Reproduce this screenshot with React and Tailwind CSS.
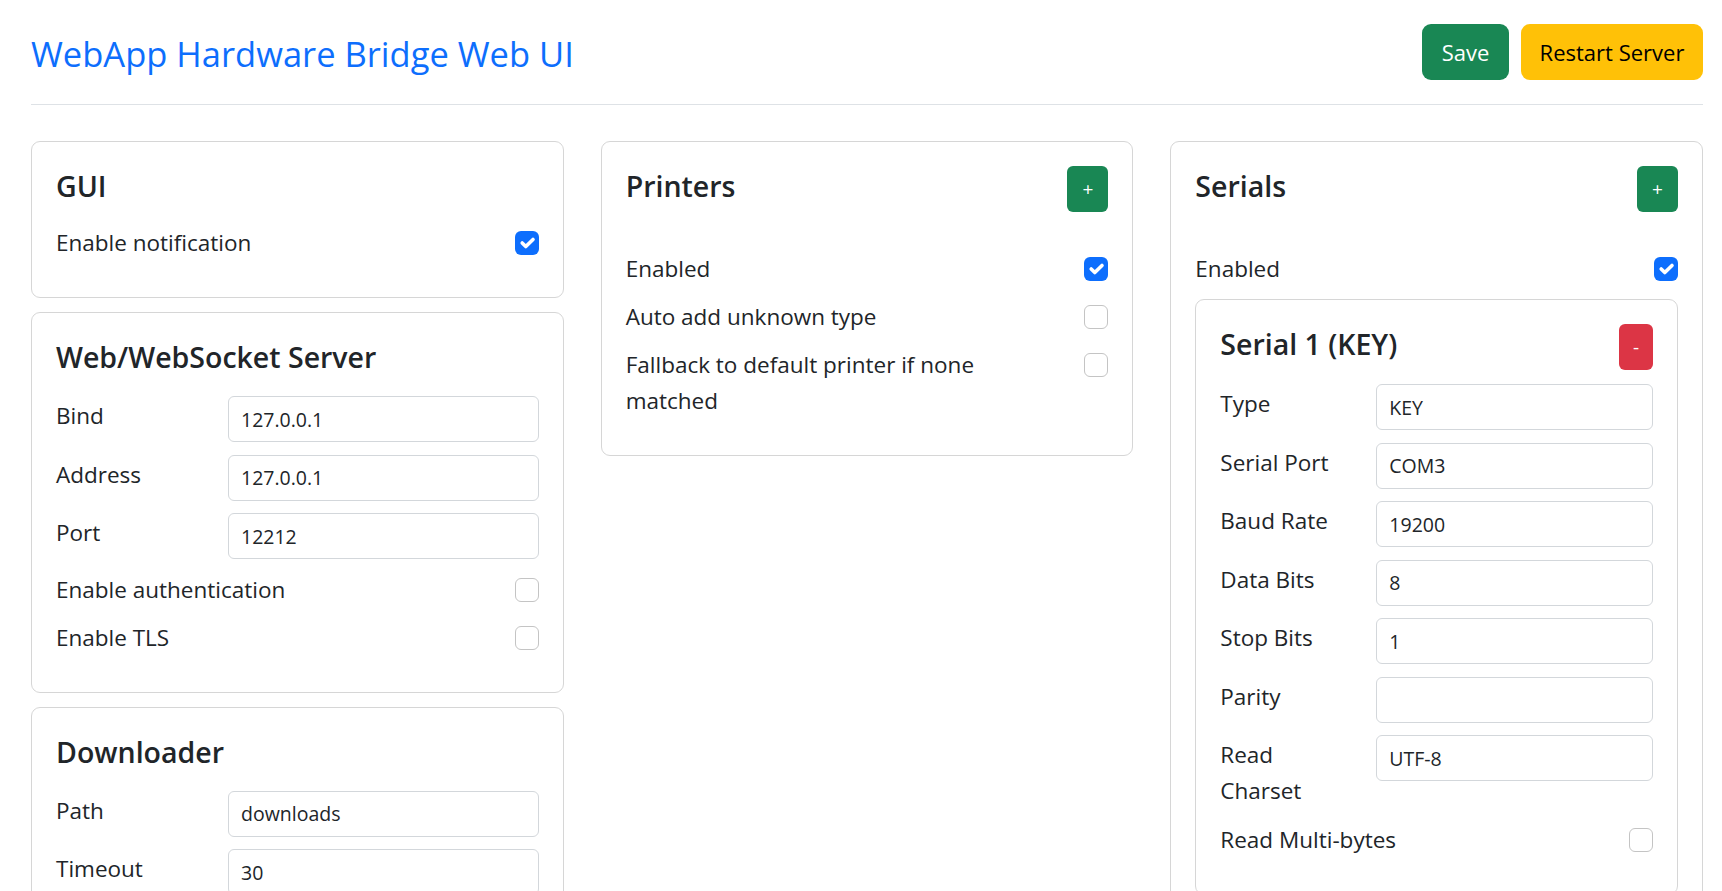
import React from 'react';

function Check({ on }) {
  if (on) {
    return (
      <span className="mt-[6px] flex h-6 w-6 shrink-0 items-center justify-center rounded-[6px] bg-[#0d6efd]">
        <svg viewBox="0 0 20 20" className="h-6 w-6">
          <path d="m6 10 3 3 6-6" fill="none" stroke="#fff" strokeLinecap="round" strokeLinejoin="round" strokeWidth="3" />
        </svg>
      </span>
    );
  }
  return <span className="mt-[6px] block h-6 w-6 shrink-0 rounded-[6px] border border-[#c4c4c4] bg-white" />;
}

function CheckRow({ label, on, narrow }) {
  return (
    <div className="mb-3 flex items-start justify-between">
      <span className={narrow ? 'max-w-[358px] leading-[36px]' : 'leading-[36px]'}>{label}</span>
      <Check on={on} />
    </div>
  );
}

function Field({ label, value, cols }) {
  return (
    <div className={`mb-[12.5px] grid gap-x-6 ${cols}`}>
      <label className="pt-[2px] leading-[36px]">{label}</label>
      <input
        readOnly
        value={value}
        className="h-[46px] w-full rounded-[6px] border border-[#d3d7db] bg-white px-3 text-[19.5px] text-[#212529] outline-none"
      />
    </div>
  );
}

function Card({ children, className = '' }) {
  return <div className={`rounded-[9px] border border-[#d6d6d6] bg-white p-6 ${className}`}>{children}</div>;
}

function Title({ children }) {
  return <h5 className="pt-[2px] text-[28.5px] font-semibold leading-[36px]">{children}</h5>;
}

function AddHeader({ title }) {
  return (
    <div className="mb-[39px] flex items-start justify-between">
      <Title>{title}</Title>
      <button className="h-[46px] w-[41px] rounded-[6px] bg-[#198754] text-[19px] text-white">+</button>
    </div>
  );
}

const MAIN = 'grid-cols-[148px_1fr]';
const SUB = 'grid-cols-[132px_1fr]';

export default function App() {
  return (
    <div className="h-screen overflow-hidden bg-white pl-[31px] pr-[19px] font-['Open_Sans',sans-serif] text-[22.5px] text-[#212529]">
      <div className="mb-9 flex items-center justify-between border-b border-[#dee2e6] pt-6 pb-6">
        <h1 className="pt-[4px] text-[34.5px] font-normal leading-[48px] text-[#0d6efd]">WebApp Hardware Bridge Web UI</h1>
        <div className="flex gap-3">
          <button className="h-[56px] w-[87px] rounded-[9px] bg-[#198754] text-[22px] text-white">Save</button>
          <button className="h-[56px] w-[182px] rounded-[9px] bg-[#ffc107] text-[22px] text-black">Restart Server</button>
        </div>
      </div>

      <div className="grid grid-cols-3 items-start gap-x-[37px]">
        <div className="flex flex-col gap-[14px]">
          <Card>
            <div className="mb-[21px]"><Title>GUI</Title></div>
            <CheckRow label="Enable notification" on />
          </Card>
          <Card>
            <div className="mb-[21px]"><Title>Web/WebSocket Server</Title></div>
            <Field label="Bind" value="127.0.0.1" cols={MAIN} />
            <Field label="Address" value="127.0.0.1" cols={MAIN} />
            <Field label="Port" value="12212" cols={MAIN} />
            <CheckRow label="Enable authentication" />
            <CheckRow label="Enable TLS" />
          </Card>
          <Card>
            <div className="mb-[21px]"><Title>Downloader</Title></div>
            <Field label="Path" value="downloads" cols={MAIN} />
            <Field label="Timeout" value="30" cols={MAIN} />
          </Card>
        </div>

        <Card>
          <AddHeader title="Printers" />
          <CheckRow label="Enabled" on narrow />
          <CheckRow label="Auto add unknown type" narrow />
          <CheckRow label="Fallback to default printer if none matched" narrow />
        </Card>

        <Card>
          <AddHeader title="Serials" />
          <CheckRow label="Enabled" on />
          <Card className="mb-3">
            <div className="mb-[14px] flex items-start justify-between">
              <Title>Serial 1 (KEY)</Title>
              <button className="h-[46px] w-[34px] rounded-[6px] bg-[#dc3545] text-[19px] text-white">-</button>
            </div>
            <Field label="Type" value="KEY" cols={SUB} />
            <Field label="Serial Port" value="COM3" cols={SUB} />
            <Field label="Baud Rate" value="19200" cols={SUB} />
            <Field label="Data Bits" value="8" cols={SUB} />
            <Field label="Stop Bits" value="1" cols={SUB} />
            <Field label="Parity" value="" cols={SUB} />
            <Field label="Read Charset" value="UTF-8" cols={SUB} />
            <CheckRow label="Read Multi-bytes" />
          </Card>
        </Card>
      </div>
    </div>
  );
}
